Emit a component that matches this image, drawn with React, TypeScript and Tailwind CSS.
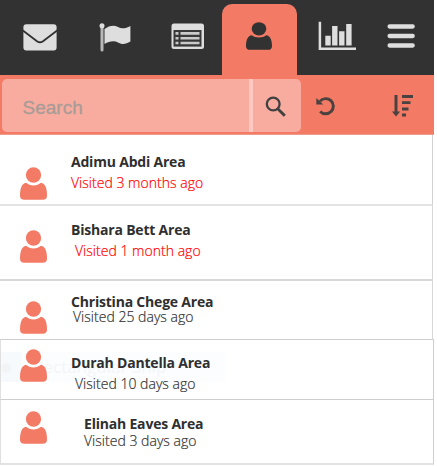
import React from "react";

type Visit = {
  name: string;
  visited: string;
  row: string;
  icon: string;
  nameClass: string;
  visitedClass: string;
};

const visits: Visit[] = [
  {
    name: "Adimu Abdi Area",
    visited: "Visited 3 months ago",
    row: "w-[433px] h-[71px] border-r border-b-2 border-r-[#d2d2d2] border-b-[#e3e3e3] pl-5",
    icon: "mt-8",
    nameClass: "ml-[24px] mt-[17px]",
    visitedClass: "ml-[24px] mt-[1px] text-[#ff0000] [-webkit-text-stroke:0.2px_#ff0000]",
  },
  {
    name: "Bishara Bett Area",
    visited: "Visited 1 month ago",
    row: "w-[433px] h-[75px] border-r border-b-2 border-r-[#d8d8d8] border-b-[#d8d8d8] pl-5",
    icon: "mt-6",
    nameClass: "ml-[24px] mt-[14px]",
    visitedClass: "ml-[28px] mt-[1px] text-[#ff0000] [-webkit-text-stroke:0.2px_#ff0000]",
  },
  {
    name: "Christina Chege Area",
    visited: "Visited 25 days ago",
    row: "w-[433px] h-[58px] border-r border-r-[#d8d8d8] pl-5",
    icon: "mt-[20px]",
    nameClass: "ml-[24px] mt-[11px]",
    visitedClass: "ml-[26px] -mt-[5px] text-[#333333] [-webkit-text-stroke:0.2px_#333333]",
  },
  {
    name: "Durah Dantella Area",
    visited: "Visited 10 days ago",
    row: "w-[434px] h-[61px] border border-[#cecece] border-l-[#e0e0e0] pl-[19px]",
    icon: "mt-[9px]",
    nameClass: "ml-[24px] mt-[13px]",
    visitedClass: "ml-[28px] mt-[1px] text-[#333333] [-webkit-text-stroke:0.2px_#333333]",
  },
  {
    name: "Elinah Eaves Area",
    visited: "Visited 3 days ago",
    row: "w-[434px] h-[65px] border-x border-b-2 border-x-[#cecece] border-l-[#e0e0e0] border-b-[#e3e3e3] pl-[19px]",
    icon: "mt-[11px]",
    nameClass: "ml-[37px] mt-[14px]",
    visitedClass: "ml-[37px] -mt-[3px] text-[#333333] [-webkit-text-stroke:0.2px_#333333]",
  },
];

function Person({ className }: { className: string }) {
  return (
    <svg viewBox="0 0 27 33" preserveAspectRatio="none" className={className} fill="currentColor">
      <ellipse cx="13.5" cy="8" rx="7.6" ry="7.8" />
      <path d="M6 15.7C8 17.3 10.5 18.4 13.5 18.4S19 17.3 21 15.7C25 16.3 27 21 27 28.5Q27 32.8 22.5 32.8H4.5Q0 32.8 0 28.5C0 21 2 16.3 6 15.7Z" />
    </svg>
  );
}

function Mail() {
  return (
    <svg viewBox="0 0 34 27" className="ml-[23px] mt-6 h-[27px] w-[34px]">
      <rect x=".4" y=".2" width="33.2" height="26.2" rx="3" fill="#dedede" />
      <path d="M-.5 6.3L14 17.2Q17 19.3 20 17.2L34.5 6.3" stroke="#323232" strokeWidth="1.9" fill="none" />
    </svg>
  );
}

function Flag() {
  return (
    <svg viewBox="0 0 33 30" className="ml-[42px] mt-[23px] h-[30px] w-[33px]">
      <path d="M3 3V27" stroke="#b9b9b9" strokeWidth="3" strokeLinecap="round" />
      <circle cx="3" cy="2.7" r="2.5" fill="#dedede" />
      <path d="M5.5 6C10 2.6 15 1.6 19 4C23 6.3 27 5.2 31.4 2.9V18.5C27 21 24 22 19.5 19.7C15 17.3 10.5 18.2 5.5 21Z" fill="#dedede" />
    </svg>
  );
}

function ListBox() {
  return (
    <svg viewBox="0 0 34 27" className="ml-[39px] mt-[23px] h-[27px] w-[34px]">
      <rect x="0.5" y="0.5" width="32.5" height="25.5" rx="2.5" fill="#dedede" />
      <rect x="2.5" y="7" width="28" height="16.6" fill="#383838" />
      <path d="M4.5 10.4H7.5M4.5 15.2H7.5M4.5 20H7.5M9.5 10.4H28.5M9.5 15.2H28.5M9.5 20H28.5" stroke="#c9c9c9" strokeWidth="2.6" />
    </svg>
  );
}

function Chart() {
  return (
    <svg viewBox="0 0 39 30" className="ml-[21px] mt-[21px] h-[30px] w-[39px]">
      <path d="M1.9 .8V27.7H38" stroke="#dedede" strokeWidth="2.5" fill="none" />
      <path d="M10 14.8V24.5M16.8 5V24.5M23.8 10.3V24.5M30.9 3V24.5" stroke="#dedede" strokeWidth="5.4" />
    </svg>
  );
}

function Menu() {
  return (
    <svg viewBox="0 0 28 26" className="ml-[30px] mt-[23px] h-[26px] w-7">
      <path d="M2.6 3.5H25.7M2.6 13H25.7M2.6 22.5H25.7" stroke="#dedede" strokeWidth="4.3" strokeLinecap="round" />
    </svg>
  );
}

function Magnifier() {
  return (
    <svg viewBox="0 0 21 21" className="h-[21px] w-[21px]" fill="none" stroke="#404040">
      <circle cx="8.2" cy="8" r="6.4" strokeWidth="2.3" />
      <path d="M13 13L19.8 19.7" strokeWidth="2.9" />
    </svg>
  );
}

function Undo() {
  return (
    <svg viewBox="0 0 20 20" className="ml-[15px] mt-[21px] h-5 w-5" fill="none">
      <path d="M4 5.2A7.6 7.6 0 1 1 4.2 15.4" stroke="#4a4240" strokeWidth="2.9" />
      <path d="M.3 2V8.4H7.2Z" fill="#4a4240" />
    </svg>
  );
}

function Sort() {
  return (
    <svg viewBox="0 0 22 23" className="ml-[55px] mt-[19px] h-[23px] w-[22px]" fill="none">
      <path d="M5 1V19" stroke="#4a4240" strokeWidth="3" />
      <path d="M1 17.6H9.2L5 22.4Z" fill="#4a4240" />
      <path d="M11 2.5H22M11 8.7H19.5M11 15H17.5M11 21H15" stroke="#4a4240" strokeWidth="2.8" />
    </svg>
  );
}

export default function App() {
  return (
    <div className="h-[466px] w-[437px] overflow-hidden bg-white font-['Open_Sans',sans-serif]">
      <nav className="flex h-[75px] w-[434px] items-start bg-[#323232]">
        <Mail />
        <Flag />
        <ListBox />
        <div className="ml-[17px] mt-1 flex h-[71px] w-[75px] justify-center rounded-t-[10px] bg-[#f37a65] pt-[18px] pr-px text-[#323232]">
          <Person className="h-7 w-[26px]" />
        </div>
        <Chart />
        <Menu />
      </nav>
      <div className="flex h-[60px] w-[434px] items-start border-b border-[#f09a8b] bg-[#f37a65]">
        <div className="ml-[2px] mt-1 flex h-[53px] w-[299px] overflow-hidden rounded-[5px] bg-[#f8ac9f]">
          <input
            aria-label="Search"
            placeholder="Search"
            className="h-full w-[247px] pl-[20.5px] pt-[4px] font-['Liberation_Sans',Arial,sans-serif] text-[19px] outline-none placeholder:text-[#a99b96] [-webkit-text-stroke:0.3px_#a99b96]"
          />
          <div className="w-1 bg-[#fcc9c0]" />
          <button className="flex w-12 items-center justify-center pr-[3px] pt-[2px]" aria-label="Find">
            <Magnifier />
          </button>
        </div>
        <Undo />
        <Sort />
      </div>
      <main>
        {visits.map((visit, index) => (
          <section key={visit.name} className={`flex items-start whitespace-nowrap ${visit.row} ${index === 3 ? "relative" : ""}`}>
            {index === 3 && (
              <div className="absolute left-0 top-3 flex h-[30px] w-[225px] items-center bg-[#fbfdff] text-[17px] text-[#f4f5f7]">
                <span className="h-full w-5 bg-[#f7fafd] pt-[11px]">
                  <span className="block h-[10px] w-[10px] rounded-full bg-[#f2f4f6]" />
                </span>
                <span className="ml-3">Rectangular Snip</span>
              </div>
            )}
            <Person className={`relative h-[33px] w-[27px] shrink-0 text-[#f37a65] ${visit.icon}`} />
            <div className="relative text-[14px] leading-5">
              <h2 className={`font-bold tracking-[-0.2px] text-[#2f2f2f] ${visit.nameClass}`}>{visit.name}</h2>
              <p className={`font-light tracking-[0.02px] ${visit.visitedClass}`}>{visit.visited}</p>
            </div>
          </section>
        ))}
      </main>
    </div>
  );
}
